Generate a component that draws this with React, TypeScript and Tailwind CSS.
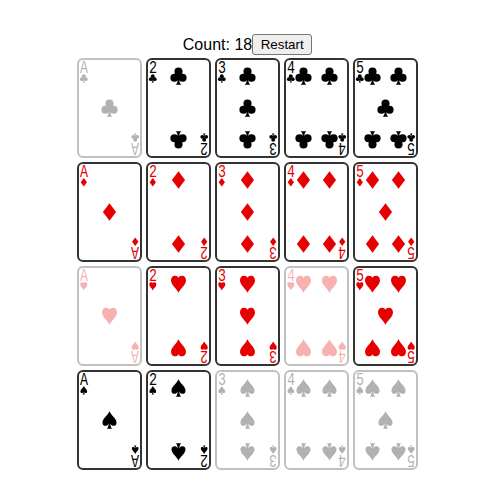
const RED = "#e60000";
const BLACK = "#000000";

function Suit({ s, x, y, k, flip }: { s: string; x: number; y: number; k: number; flip?: boolean }) {
  const t = `translate(${x} ${y}) scale(${k}) rotate(${flip ? 180 : 0})`;
  if (s === "D") return <polygon transform={t} points="0,-10 7.5,0 0,10 -7.5,0" />;
  if (s === "H")
    return (
      <path
        transform={t}
        d="M0,10 C-2,5 -8.5,1 -8.5,-4 C-8.5,-8 -6,-9.5 -4,-9.5 C-2,-9.5 -0.5,-8.5 0,-7 C0.5,-8.5 2,-9.5 4,-9.5 C6,-9.5 8.5,-8 8.5,-4 C8.5,1 2,5 0,10 Z"
      />
    );
  if (s === "S")
    return (
      <path
        transform={t}
        d="M0,-10 C2,-5 8,-2 8,3 C8,6 5.5,7 3.8,6.5 C2.5,6.2 1.5,5.2 1,4 C1,6.5 1.6,8.5 3,10 L-3,10 C-1.6,8.5 -1,6.5 -1,4 C-1.5,5.2 -2.5,6.2 -3.8,6.5 C-5.5,7 -8,6 -8,3 C-8,-2 -2,-5 0,-10 Z"
      />
    );
  return (
    <g transform={t}>
      <circle cx="0" cy="-5" r="4.6" />
      <circle cx="-4.6" cy="2" r="4.6" />
      <circle cx="4.6" cy="2" r="4.6" />
      <path d="M-1,-1 L1,-1 L1,5 C1,7 2,9 3.2,10 L-3.2,10 C-2,9 -1,7 -1,5 Z" />
    </g>
  );
}

const PIPS: Record<string, number[][]> = {
  A: [[32, 50]],
  "2": [[32, 18], [32, 82]],
  "3": [[32, 18], [32, 50], [32, 82]],
  "4": [[19, 18], [45, 18], [19, 82], [45, 82]],
  "5": [[19, 18], [45, 18], [32, 50], [19, 82], [45, 82]],
};

function Card({ rank, suit, faded }: { rank: string; suit: string; faded?: boolean }) {
  const color = suit === "D" || suit === "H" ? RED : BLACK;
  const corner = (
    <>
      <text
        x="3"
        y="15.2"
        fontSize="18"
        fontFamily="'Liberation Mono', 'Courier New', monospace"
        textLength="8"
        lengthAdjust="spacingAndGlyphs"
        transform="rotate(0.01)"
      >
        {rank}
      </text>
      <Suit s={suit} x={6.8} y={20.3} k={0.42} />
    </>
  );
  return (
    <div
      className={
        faded
          ? "h-[100px] w-[65px] rounded-[6px] border-2 border-[#333333] bg-white opacity-30"
          : "h-[100px] w-[65px] rounded-[6px] border-2 border-[#333333] bg-white"
      }
    >
      <svg viewBox="2 2 61 96" className="block h-[96px] w-[61px] overflow-visible" fill={color}>
        {corner}
        <g transform="rotate(180 32.5 50)">{corner}</g>
        {PIPS[rank].map(([x, y], i) => (
          <Suit key={i} s={suit} x={x + 0.5} y={y} k={0.88} flip={y > 50} />
        ))}
      </svg>
    </div>
  );
}

const RANKS = ["A", "2", "3", "4", "5"];
const SUITS = ["C", "D", "H", "S"];
const FADED = new Set(["AC", "AH", "4H", "3S", "4S", "5S"]);

export default function App() {
  return (
    <div className="h-[501px] w-[500px] overflow-hidden bg-white pt-[34px] font-['Liberation_Sans',Arial,sans-serif]">
      <div className="flex w-[495px] justify-center text-[16px] leading-[21px] text-black">
        <span className="leading-[22px]">Count: 18</span>
        <button className="h-[21px] w-[60px] rounded-[3px] border border-[#767676] bg-[#efefef] text-[13.33px] leading-none text-black">
          Restart
        </button>
      </div>
      <div className="mt-[2px] ml-[77px] grid w-[341px] grid-cols-[repeat(5,65px)] gap-x-[4px] gap-y-[4px]">
        {SUITS.flatMap((s) =>
          RANKS.map((r) => <Card key={r + s} rank={r} suit={s} faded={FADED.has(r + s)} />)
        )}
      </div>
    </div>
  );
}
